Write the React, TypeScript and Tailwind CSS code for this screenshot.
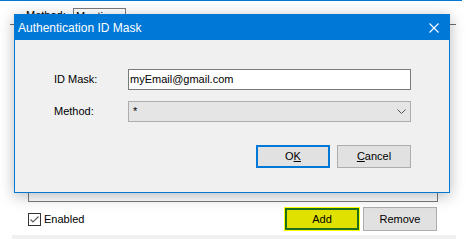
import React from "react";

export default function App() {
  return (
    <div className="relative w-[471px] h-[247px] bg-white overflow-hidden font-['Liberation_Sans',Arial,sans-serif] text-[11px] text-black">
      {/* top accent line */}
      <div className="w-[462px] h-px bg-[#0078d7]" />

      {/* parent window content */}
      <div className="flex items-start pt-[7px] pl-[26px] h-[23px]">
        <span className="w-[47px] leading-[14px]">Method:</span>
        <div className="w-[53px] h-[16px] border border-[#7a7a7a] bg-white pl-[2px] leading-[14px]">Mention</div>
      </div>
      <div className="ml-[10px] w-[446px] h-px bg-[#6e6e6e]" />
      <div className="ml-[28px] w-[410px] h-[177px] border-x border-b border-[#7a7a7a]" />
      <div className="flex items-center mt-[5px] h-[24px] pl-[28px]">
        <div className="w-[256px] flex items-center">
          <div className="w-[13px] h-[13px] border border-[#333333] bg-white flex items-center justify-center">
            <svg width="11" height="11" viewBox="0 0 11 11">
              <path d="M1.5 5.5 L4 8 L9.5 2.5" fill="none" stroke="#606060" strokeWidth="1.2" />
            </svg>
          </div>
          <span className="ml-[3px] leading-[13px]">Enabled</span>
        </div>
        <div className="w-[76px] h-[24px] bg-[#ffff00] p-px">
          <div className="w-full h-full border-2 border-[#1e6e1e] bg-[#e1e100] flex items-center justify-center">
            Add
          </div>
        </div>
        <div className="ml-[3px] w-[74px] h-[24px] border border-[#adadad] bg-[#e1e1e1] flex items-center justify-center">
          Remove
        </div>
      </div>
      <div className="mt-[4px] ml-[12px] w-[444px] h-[4px] bg-[#f0f0f0]" />

      {/* dialog overlay */}
      <div className="absolute left-[14px] top-[14px] w-[436px] h-[179px] border border-[#0078d7] bg-[#f0f0f0] shadow-[0_3px_14px_rgba(0,0,0,0.28)] flex flex-col">
        <div className="h-[25px] bg-[#0078d7] flex items-center justify-between pl-[3px] pr-[10px]">
          <span className="text-white text-[12px] leading-[16px]">Authentication ID Mask</span>
          <svg width="10" height="10" viewBox="0 0 10 10">
            <path d="M0.5 0.5 L9.5 9.5 M9.5 0.5 L0.5 9.5" stroke="white" strokeWidth="1.1" fill="none" />
          </svg>
        </div>
        <div className="flex flex-col pl-[39px] pt-[29px]">
          <div className="flex items-center h-[21px]">
            <span className="w-[74px]">ID Mask:</span>
            <div className="w-[283px] h-[21px] border border-[#7a7a7a] bg-white flex items-center pl-[1px]">
              myEmail@gmail.com
            </div>
          </div>
          <div className="flex items-center h-[21px] mt-[11px]">
            <span className="w-[74px]">Method:</span>
            <div className="w-[283px] h-[21px] border border-[#adadad] bg-[#e5e5e5] flex items-center justify-between pl-[4px] pr-[4px]">
              <span>*</span>
              <svg width="9" height="5" viewBox="0 0 9 5">
                <path d="M0.5 0.5 L4.5 4.5 L8.5 0.5" fill="none" stroke="#555555" strokeWidth="1" />
              </svg>
            </div>
          </div>
          <div className="flex justify-end gap-[7px] mt-[23px] w-[357px]">
            <div className="w-[74px] h-[23px] border-2 border-[#0078d7] bg-[#e1e1e1] flex items-center justify-center">
              <span>
                O<span className="underline">K</span>
              </span>
            </div>
            <div className="w-[74px] h-[23px] border border-[#adadad] bg-[#e1e1e1] flex items-center justify-center">
              <span>
                <span className="underline">C</span>ancel
              </span>
            </div>
          </div>
        </div>
      </div>
    </div>
  );
}
